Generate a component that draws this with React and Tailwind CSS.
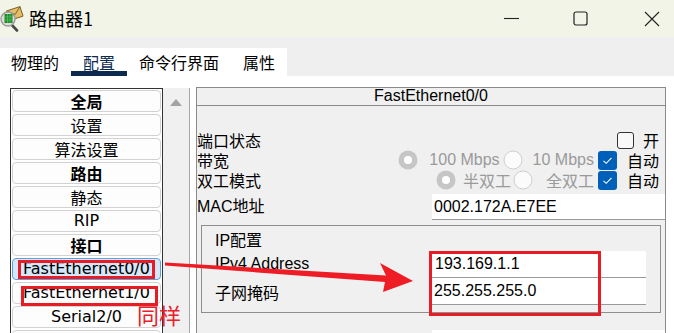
import React from "react";

const UI = { fontFamily: '"Liberation Sans", "Noto Sans CJK SC", sans-serif' };
const LIST = { fontFamily: '"DejaVu Sans", "Noto Sans CJK SC", sans-serif' };
const CJK = { fontFamily: '"Noto Sans CJK SC", sans-serif' };

function TitleIcon() {
  return (
    <svg width="24" height="26" viewBox="0 0 24 26">
      <g transform="rotate(-18 15 8)">
        <rect x="8" y="2.5" width="14" height="10" fill="#e3bd68" stroke="#7d5f22" strokeWidth="0.9" />
        <path d="M8 2.5 L15 8.5 L22 2.5" fill="none" stroke="#7d5f22" strokeWidth="0.9" />
      </g>
      <line x1="11" y1="18" x2="17" y2="24.5" stroke="#4a4a4a" strokeWidth="2.6" strokeLinecap="round" />
      <circle cx="8" cy="13" r="7" fill="#dcdcdc" stroke="#9b9b9b" strokeWidth="1.4" />
      <rect x="4.5" y="8" width="8" height="9" fill="#1e8a2c" />
      <path d="M4.5 11 H12.5 M4.5 14 H12.5 M7.5 8 V17 M10 8 V17" stroke="#5fd06a" strokeWidth="0.6" />
    </svg>
  );
}

function Radio({ checked }) {
  if (checked) {
    return (
      <svg width="20" height="20" viewBox="0 0 20 20" className="shrink-0">
        <circle cx="10" cy="10" r="9.5" fill="#c6c6c6" />
        <circle cx="10" cy="10" r="4" fill="#ffffff" />
      </svg>
    );
  }
  return (
    <svg width="20" height="20" viewBox="0 0 20 20" className="shrink-0">
      <circle cx="10" cy="10" r="9" fill="#fbfbfb" stroke="#cfcfcf" strokeWidth="1" />
    </svg>
  );
}

function BlueCheck() {
  return (
    <div className="w-[19px] h-[19px] rounded-[3px] bg-[#005fb8] flex items-center justify-center shrink-0">
      <svg width="11" height="9" viewBox="0 0 11 9">
        <path d="M1.5 4.8 L4.2 7.3 L9.5 1.8" fill="none" stroke="#ffffff" strokeWidth="1.1" />
      </svg>
    </div>
  );
}

function ListItem({ children, bold, selected, cjk }) {
  return (
    <div
      className={
        "ml-[1px] mb-[2px] w-[149px] h-[22px] rounded-[4px] border flex items-center justify-center text-[16px] leading-none text-black whitespace-nowrap " +
        (selected ? "bg-[#d5e7f8] border-[#5f9fdc]" : "bg-[#fdfdfd] border-[#d2d2d2]") +
        (bold ? " font-bold" : "")
      }
      style={cjk ? CJK : LIST}
    >
      {children}
    </div>
  );
}

export default function App() {
  return (
    <div className="relative w-[674px] h-[333px] overflow-hidden bg-white text-black" style={UI}>
      {/* Title bar */}
      <div className="h-[37px] bg-[#f1f4e6] flex items-center">
        <div className="mt-[1px]">
          <TitleIcon />
        </div>
        <div className="ml-[5px] text-[18px] leading-none mb-[2px]" style={CJK}>路由器1</div>
        <div className="flex-1" />
        <svg width="16" height="16" viewBox="0 0 16 16" className="mr-[53px]">
          <line x1="0" y1="7.5" x2="15" y2="7.5" stroke="#222" strokeWidth="1.1" />
        </svg>
        <svg width="16" height="16" viewBox="0 0 16 16" className="mr-[55px]">
          <rect x="1" y="1" width="13" height="13" rx="2" fill="none" stroke="#222" strokeWidth="1.2" />
        </svg>
        <svg width="16" height="16" viewBox="0 0 16 16" className="mr-[14px]">
          <path d="M1 1 L15 15 M15 1 L1 15" stroke="#222" strokeWidth="1.1" />
        </svg>
      </div>

      {/* Tabs */}
      <div className="h-[39px] bg-[#efefef] pt-[11px]">
        <div className="w-[287px] h-[28px] bg-white flex text-[16px] whitespace-nowrap overflow-hidden" style={CJK}>
          <div className="ml-[-1px] px-[12px] h-full flex items-center shrink-0">物理的</div>
          <div className="px-[12px] h-full flex items-center shrink-0 text-[#0c2a50] shadow-[inset_0_-5px_0_#0c2a50] pb-[1px]">配置</div>
          <div className="px-[12px] h-full flex items-center shrink-0">命令行界面</div>
          <div className="px-[12px] h-full flex items-center shrink-0">属性</div>
        </div>
      </div>

      {/* Main */}
      <div className="h-[257px] flex overflow-hidden">
        {/* Left list */}
        <div className="ml-[10px] mt-[12px] w-[153px] h-[260px] border border-[#333] bg-white pt-[1px] shrink-0">
          <ListItem bold cjk>全局</ListItem>
          <ListItem cjk>设置</ListItem>
          <ListItem cjk>算法设置</ListItem>
          <ListItem bold cjk>路由</ListItem>
          <ListItem cjk>静态</ListItem>
          <ListItem>RIP</ListItem>
          <ListItem bold cjk>接口</ListItem>
          <ListItem selected>FastEthernet0/0</ListItem>
          <ListItem>FastEthernet1/0</ListItem>
          <ListItem>Serial2/0</ListItem>
          <ListItem> </ListItem>
        </div>
        {/* Scrollbar */}
        <div className="mt-[12px] w-[27px] h-[260px] bg-[#f0f0f0] border-r border-[#a8a8a8] flex justify-center pt-[11px] shrink-0">
          <svg width="12" height="7" viewBox="0 0 12 7">
            <path d="M6 0 L12 7 L0 7 Z" fill="#a3a3a3" />
          </svg>
        </div>

        {/* Right panel */}
        <div className="ml-[6px] mt-[11px] w-[470px] h-[270px] border border-[#8a8a8a] bg-[#f0f0f0] flex flex-col shrink-0">
          <div className="h-[20px] border-b border-[#8a8a8a] flex items-center justify-center text-[16px] leading-none pb-[1px]">
            FastEthernet0/0
          </div>
          <div className="pt-[24px] text-[16px] leading-none">
            {/* Row 1 */}
            <div className="h-[20px] flex items-center pr-[6px]">
              <div className="flex-1" style={CJK}>端口状态</div>
              <div className="w-[17px] h-[17px] rounded-[3px] border border-[#333] bg-[#f8f8f8]" />
              <div className="ml-[9px]" style={CJK}>开</div>
            </div>
            {/* Row 2 */}
            <div className="h-[20px] flex items-center pr-[6px]">
              <div className="flex-1" style={CJK}>带宽</div>
              <Radio checked />
              <div className="ml-[11px] text-[#9a9a9a]">100 Mbps</div>
              <div className="ml-[3px]"><Radio /></div>
              <div className="ml-[10px] text-[#9a9a9a]">10 Mbps</div>
              <div className="ml-[4px]"><BlueCheck /></div>
              <div className="ml-[10px]" style={CJK}>自动</div>
            </div>
            {/* Row 3 */}
            <div className="h-[20px] flex items-center pr-[6px]">
              <div className="flex-1" style={CJK}>双工模式</div>
              <Radio checked />
              <div className="ml-[7px] text-[#9a9a9a]" style={CJK}>半双工</div>
              <div className="ml-[2px]"><Radio /></div>
              <div className="ml-[13px] text-[#9a9a9a]" style={CJK}>全双工</div>
              <div className="ml-[4px]"><BlueCheck /></div>
              <div className="ml-[10px]" style={CJK}>自动</div>
            </div>
            {/* MAC */}
            <div className="mt-[4px] h-[26px] flex items-center">
              <div className="w-[235px]">MAC地址</div>
              <div className="flex-1 h-full bg-white border-b border-[#9a9a9a] flex items-center pl-[2px]">0002.172A.E7EE</div>
            </div>
            {/* IP box */}
            <div className="mt-[5px] ml-[4px] w-[460px] h-[88px] border border-[#8e8e8e] pt-[5px]">
              <div className="h-[20px] flex items-center pl-[13px]">IP配置</div>
              <div className="grid grid-cols-[230px_214px]">
                <div className="h-[27px] pl-[13px] pt-[5px]">IPv4 Address</div>
                <div className="h-[27px] bg-white border-b border-[#9a9a9a] flex items-center pl-[3px]">193.169.1.1</div>
                <div className="h-[27px] pl-[13px] flex items-center" style={CJK}>子网掩码</div>
                <div className="h-[27px] bg-white border-b border-[#9a9a9a] flex items-center pl-[2px]">255.255.255.0</div>
              </div>
            </div>
            <div className="mt-[17px] ml-[235px] h-[26px] bg-white" />
          </div>
        </div>
      </div>

      {/* Annotations */}
      <div className="absolute left-[18px] top-[260px] w-[137px] h-[19px] border-[3px] border-[#e81c24]" />
      <div className="absolute left-[21px] top-[286px] w-[137px] h-[20px] border-[3px] border-[#e81c24]" />
      <div className="absolute left-[429px] top-[251px] w-[172px] h-[65px] border-[3px] border-[#e81c24]" />
      <div className="absolute left-[137px] top-[303px] text-[22px] leading-none text-[#e8202a]" style={CJK}>同样</div>
      <svg className="absolute left-0 top-0 pointer-events-none" width="674" height="333" viewBox="0 0 674 333">
        <polygon
          points="165,262.5 386,275.5 380,263 413,281 383,292 385,282 165,265.5"
          fill="#ee1c24"
        />
      </svg>
    </div>
  );
}
